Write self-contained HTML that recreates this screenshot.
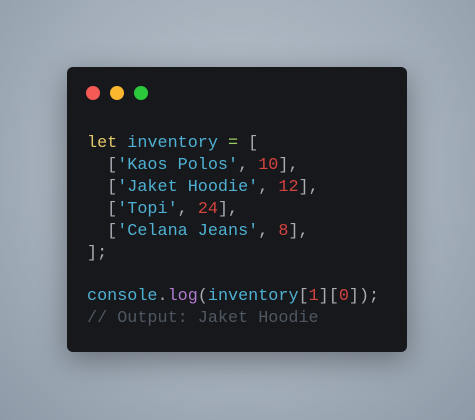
<!DOCTYPE html>
<html><head><style>
html,body{margin:0;padding:0;}
body{width:475px;height:420px;overflow:hidden;background:radial-gradient(ellipse at 50% 40%,#b8c1cb 0%,#a3aeba 60%,#8e9aa7 100%);position:relative;}
.win{position:absolute;left:67px;top:67px;width:340px;height:285px;background:#17181b;border-radius:6px;box-shadow:0 8px 30px rgba(0,0,0,.35);}
.dot{position:absolute;top:19px;width:14px;height:14px;border-radius:50%;}
pre{position:absolute;left:20px;top:66px;margin:0;font-family:"Liberation Mono",monospace;font-size:16.8px;line-height:21.9px;color:#a8acb3;}
.k{color:#e4c76b}.v{color:#4eb1d3}.n{color:#d4433f}.f{color:#b07ad0}.c{color:#4f5862}.o{color:#9ccc65}
</style></head><body>
<div class="win">
<div class="dot" style="left:19px;background:#f65a54"></div>
<div class="dot" style="left:43px;background:#fbb72d"></div>
<div class="dot" style="left:67px;background:#2cc83b"></div>
<pre><span class="k">let</span> <span class="v">inventory</span> <span class="o">=</span> [
  [<span class="v">'Kaos Polos'</span>, <span class="n">10</span>],
  [<span class="v">'Jaket Hoodie'</span>, <span class="n">12</span>],
  [<span class="v">'Topi'</span>, <span class="n">24</span>],
  [<span class="v">'Celana Jeans'</span>, <span class="n">8</span>],
];

<span class="v">console</span>.<span class="f">log</span>(<span class="v">inventory</span>[<span class="n">1</span>][<span class="n">0</span>]);
<span class="c">// Output: Jaket Hoodie</span></pre>
</div>
</body></html>
